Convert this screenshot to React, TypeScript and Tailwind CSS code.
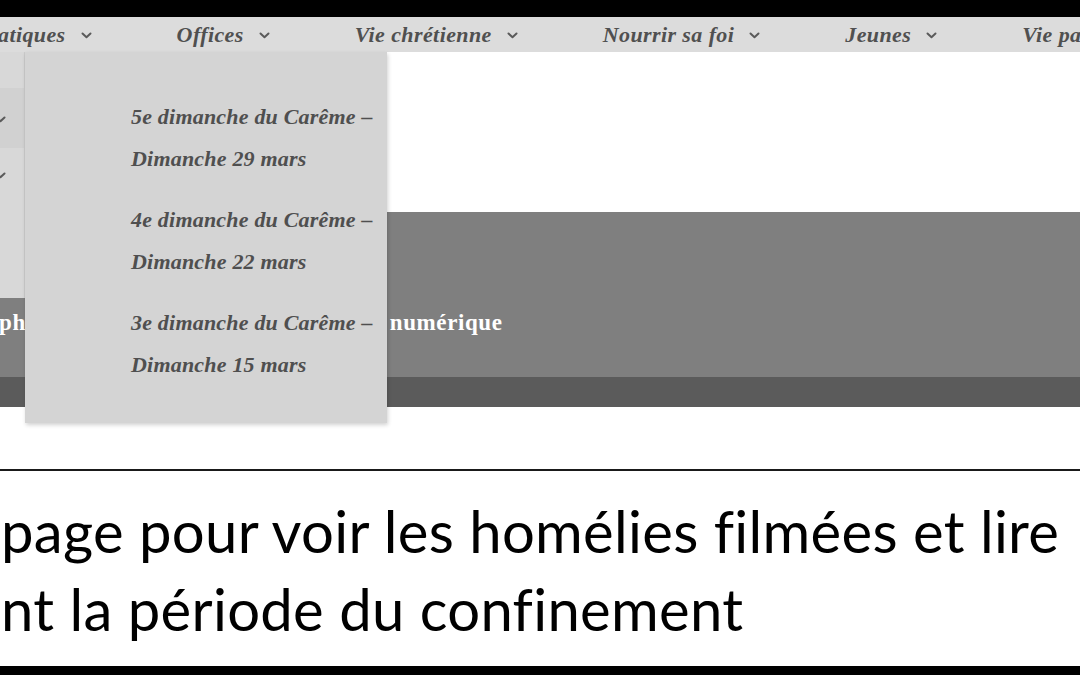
import React from "react";

const serif = { fontFamily: '"Liberation Serif", "Times New Roman", serif' };

function Chevron({ className = "" }: { className?: string }) {
  return (
    <svg width="11" height="7" viewBox="0 0 11 7" className={className}>
      <path d="M1.5 1.5 L5.5 5.2 L9.5 1.5" fill="none" stroke="#5a5a5a" strokeWidth="2" strokeLinecap="round" strokeLinejoin="round" />
    </svg>
  );
}

const navItems = ["atiques", "Offices", "Vie chrétienne", "Nourrir sa foi", "Jeunes", "Vie pa"];

const homelies = [
  ["5e dimanche du Carême –", "Dimanche 29 mars"],
  ["4e dimanche du Carême –", "Dimanche 22 mars"],
  ["3e dimanche du Carême –", "Dimanche 15 mars"],
];

export default function App() {
  return (
    <div className="w-[1080px] h-[675px] overflow-hidden bg-white flex flex-col">
      <div className="h-[17px] bg-black shrink-0" />

      {/* menu */}
      <nav
        className="h-[35px] shrink-0 bg-[#dcdcdc] flex items-center gap-[85px] whitespace-nowrap overflow-hidden"
        style={serif}
      >
        {navItems.map((item, i) => (
          <div key={item} className={"flex items-center gap-[15px] shrink-0 " + (i === 0 ? "ml-[-2px]" : "")}>
            <span className="text-[22px] italic font-bold text-[#505050] tracking-[0.4px]">{item}</span>
            {i < navItems.length - 1 && <Chevron className="mt-[2px]" />}
          </div>
        ))}
      </nav>

      {/* page */}
      <div className="relative h-[417px] shrink-0 flex flex-col">
        <div className="h-[160px] bg-white" />
        <div className="h-[165px] bg-[#7f7f7f] flex items-start pt-[94px] text-white font-bold text-[23px] tracking-[0.6px]" style={serif}>
          <span className="ml-[-1px]">ph</span>
          <span className="ml-[364px]">numérique</span>
        </div>
        <div className="h-[30px] bg-[#5b5b5b]" />
        <div className="flex-1 bg-white" />

        {/* sous-menu */}
        <div className="absolute left-0 top-0 w-[25px] h-[246px] bg-[#d8d8d8] border-r border-[#cbcbcb] flex flex-col">
          <div className="h-[36px]" />
          <div className="h-[60px] bg-[#d1d1d1] flex items-center">
            <Chevron className="ml-[-5px] mt-[2px]" />
          </div>
          <div className="h-[60px] flex items-center">
            <Chevron className="ml-[-5px] mt-[-6px]" />
          </div>
        </div>

        {/* menu déroulant */}
        <div
          className="absolute left-[25px] top-0 w-[362px] h-[371px] bg-[#d4d4d4] shadow-[1px_2px_4px_rgba(0,0,0,0.18)] pl-[106px] pt-[44px] flex flex-col gap-[19px]"
          style={serif}
        >
          {homelies.map(([a, b]) => (
            <div key={a} className="text-[22px] leading-[42px] italic font-bold text-[#4f4f4f] tracking-[0.2px] whitespace-nowrap">
              <div>{a}</div>
              <div>{b}</div>
            </div>
          ))}
        </div>
      </div>

      <div className="h-[2px] bg-[#1a1a1a] shrink-0" />

      {/* légende */}
      <div
        className="flex-1 pt-[21px] pl-[1px] text-[58px] leading-[78px] text-black whitespace-nowrap overflow-hidden [font-variant-ligatures:none] tracking-[0.3px]"
        style={{ fontFamily: 'Lato, "Liberation Sans", sans-serif' }}
      >
        <div>page pour voir les homélies filmées et lire</div>
        <div>nt la période du confinement</div>
      </div>

      <div className="h-[9px] bg-black shrink-0" />
    </div>
  );
}
